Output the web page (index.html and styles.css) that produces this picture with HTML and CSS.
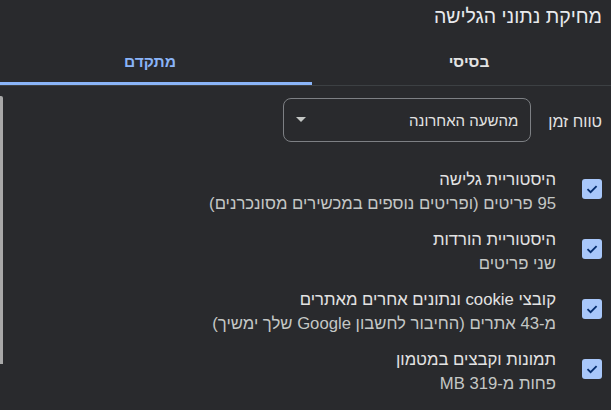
FILE: index.html
```html
<!DOCTYPE html>
<html lang="he" dir="rtl">
<head>
<meta charset="utf-8">
<link rel="stylesheet" href="styles.css">
</head>
<body>
<div class="dialog">
  <div class="title">מחיקת נתוני הגלישה</div>
  <div class="tabs">
    <div class="tab tab-basic">בסיסי</div>
    <div class="tab tab-adv active">מתקדם</div>
  </div>
  <div class="content">
    <div class="scrollbar"></div>
    <div class="range-row">
      <div class="range-label">טווח זמן</div>
      <div class="select">
        <span class="select-text">מהשעה האחרונה</span>
        <svg class="arrow" width="10" height="5" viewBox="0 0 10 5"><polygon points="0,0 10,0 5,5" fill="#c4c7c5"/></svg>
      </div>
    </div>
    <div class="items">
      <div class="item">
        <div class="check"><svg width="20" height="20" viewBox="0 0 20 20"><polyline points="5.5,10.2 8.6,13.2 14.6,7.2" fill="none" stroke="#062e6f" stroke-width="1.8"/></svg></div>
        <div class="texts">
          <div class="item-title">היסטוריית גלישה</div>
          <div class="item-sub">95 פריטים (ופריטים נוספים במכשירים מסונכרנים)</div>
        </div>
      </div>
      <div class="item">
        <div class="check"><svg width="20" height="20" viewBox="0 0 20 20"><polyline points="5.5,10.2 8.6,13.2 14.6,7.2" fill="none" stroke="#062e6f" stroke-width="1.8"/></svg></div>
        <div class="texts">
          <div class="item-title">היסטוריית הורדות</div>
          <div class="item-sub">שני פריטים</div>
        </div>
      </div>
      <div class="item">
        <div class="check"><svg width="20" height="20" viewBox="0 0 20 20"><polyline points="5.5,10.2 8.6,13.2 14.6,7.2" fill="none" stroke="#062e6f" stroke-width="1.8"/></svg></div>
        <div class="texts">
          <div class="item-title">קובצי cookie ונתונים אחרים מאתרים</div>
          <div class="item-sub">מ-43 אתרים (החיבור לחשבון Google שלך ימשיך)</div>
        </div>
      </div>
      <div class="item">
        <div class="check"><svg width="20" height="20" viewBox="0 0 20 20"><polyline points="5.5,10.2 8.6,13.2 14.6,7.2" fill="none" stroke="#062e6f" stroke-width="1.8"/></svg></div>
        <div class="texts">
          <div class="item-title">תמונות וקבצים במטמון</div>
          <div class="item-sub">פחות מ-319 MB</div>
        </div>
      </div>
    </div>
  </div>
</div>
</body>
</html>
```

FILE: styles.css
```css
html, body {
  margin: 0;
  padding: 0;
  background: #292a2d;
}
body {
  width: 611px;
  height: 410px;
  overflow: hidden;
  direction: rtl;
  font-family: "Liberation Sans", Arial, sans-serif;
  color: #e8eaed;
}
.dialog {
  width: 611px;
  height: 410px;
  display: flex;
  flex-direction: column;
}
.title {
  height: 32px;
  line-height: 32px;
  padding-right: 9px;
  font-size: 19.5px;
  color: #e8eaed;
}
.tabs {
  display: flex;
  height: 53px;
  border-bottom: 1px solid #3c4043;
}
.tab {
  box-sizing: border-box;
  height: 53px;
  padding-top: 20px;
  line-height: 20px;
  font-size: 15.5px;
  font-weight: bold;
  text-align: center;
  color: #e3e3e3;
}
.tab-basic {
  width: 299px;
  padding-left: 15px;
}
.tab-adv {
  width: 312px;
  padding-right: 12px;
}
.tab.active {
  color: #8ab4f8;
  border-bottom: 3px solid #8ab4f8;
}
.content {
  position: relative;
  flex: 1;
}
.scrollbar {
  position: absolute;
  left: 0;
  top: 10px;
  width: 3px;
  height: 268px;
  background: #a8a8a8;
  border-top-right-radius: 2px;
}
.range-row {
  display: flex;
  align-items: center;
  margin-top: 12px;
  padding-right: 9px;
  gap: 17px;
}
.range-label {
  font-size: 16px;
  color: #e3e3e3;
  padding-top: 3px;
}
.select {
  box-sizing: border-box;
  width: 248px;
  height: 44px;
  border: 1px solid #7d8084;
  border-radius: 8px;
  display: flex;
  align-items: center;
  justify-content: space-between;
  padding: 0 12px 0 12px;
}
.select-text {
  font-size: 15px;
  color: #e3e3e3;
}
.arrow {
  display: block;
  margin-top: -2px;
}
.items {
  margin-top: 20px;
  display: flex;
  flex-direction: column;
}
.item {
  box-sizing: border-box;
  height: 60px;
  padding-top: 6px;
  padding-right: 9px;
  display: flex;
  align-items: flex-start;
  gap: 26px;
}
.check {
  width: 20px;
  height: 20px;
  margin-top: 11px;
  background: #a8c7fa;
  border-radius: 3px;
  flex: none;
}
.check svg {
  display: block;
}
.texts {
  display: flex;
  flex-direction: column;
}
.item-title {
  font-size: 16.7px;
  line-height: 24px;
  color: #e3e3e3;
}
.item-sub {
  font-size: 16.7px;
  line-height: 24px;
  color: #c4c7c5;
}
```
